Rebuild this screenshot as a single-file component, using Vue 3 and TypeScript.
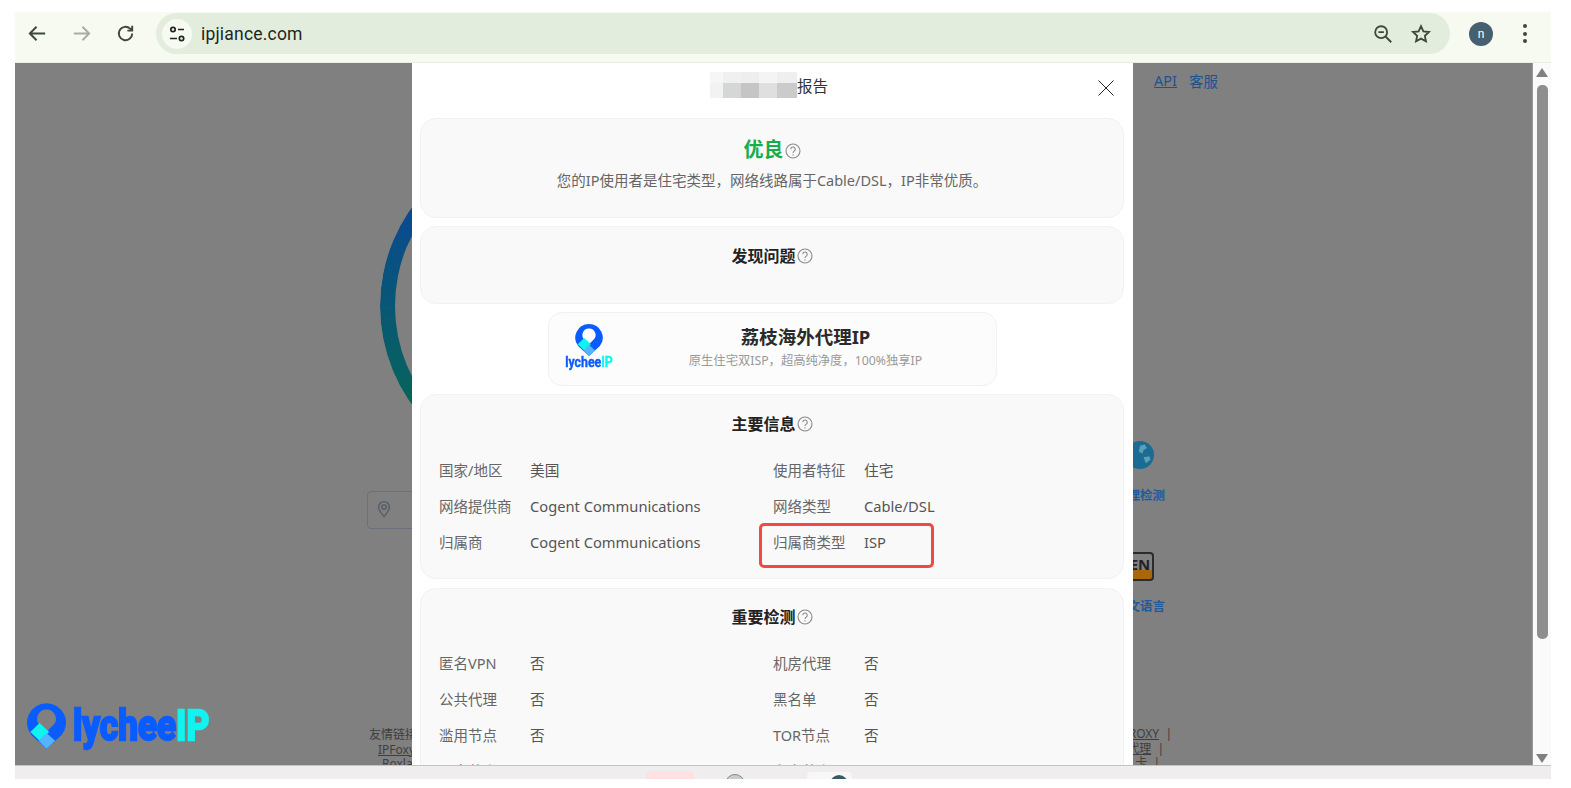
<template>
  <div class="frame">
    <svg class="defs" aria-hidden="true">
      <symbol id="help" viewBox="0 0 16 16">
        <circle cx="8" cy="8" r="7" />
        <path d="M5.8 6.2a2.2 2.2 0 1 1 3.4 1.9c-.8.5-1.2 1-1.2 2" />
        <path d="M8 11.3v1.2" />
      </symbol>
    </svg>

    <!-- browser toolbar -->
    <header class="toolbar">
      <div class="nav-btns">
        <svg class="nav-icon" viewBox="0 0 24 24"><path d="M20 12H5M11 5l-7 7 7 7" /></svg>
        <svg class="nav-icon dim" viewBox="0 0 24 24"><path d="M4 12h15M13 5l7 7-7 7" /></svg>
        <svg class="nav-icon" viewBox="0 0 24 24"><path d="M19 12a7 7 0 1 1-2.2-5.1L19 9M19 4v5h-5" /></svg>
      </div>
      <div class="omnibox">
        <span class="site-chip">
          <svg viewBox="0 0 20 20" class="tune"><circle cx="6" cy="5.5" r="2.2" /><path d="M11 5.5h6M3 14.5h7" /><circle cx="14.5" cy="14.5" r="2.2" /></svg>
        </span>
        <span class="url">ipjiance.com</span>
        <span class="spacer"></span>
        <svg class="omni-icon" viewBox="0 0 24 24"><circle cx="10" cy="10" r="6.5" /><path d="M7 10h6M15 15l6 6" /></svg>
        <svg class="omni-icon" viewBox="0 0 24 24"><path d="M12 3.5l2.6 5.6 6.1.7-4.5 4.2 1.2 6-5.4-3-5.4 3 1.2-6-4.5-4.2 6.1-.7z" /></svg>
      </div>
      <span class="avatar">n</span>
      <span class="kebab"><i></i><i></i><i></i></span>
    </header>

    <div class="viewport">
      <!-- page behind the dialog -->
      <main class="page">
        <div class="ring"></div>
        <div class="locate">
          <svg viewBox="0 0 16 20"><path d="M8 18.5C4 14 1.8 11 1.8 7.8a6.2 6.2 0 0 1 12.4 0C14.2 11 12 14 8 18.5z" /><circle cx="8" cy="7.8" r="2.5" /></svg>
        </div>
        <div class="top-links"><a class="underline">API</a><a>客服</a></div>
        <div class="tool tool-globe">
          <svg viewBox="0 0 24 24"><circle cx="12" cy="12" r="12" fill="#1a6c93" /><path d="M12 4l4-1 2 3-3 2-1 3-3-2zM15 14l5-1 1 3-4 3z" fill="#5f9db3" /></svg>
          <b>代理检测</b>
        </div>
        <div class="tool tool-lang">
          <span class="en-badge"><em>EN</em></span>
          <b>中文语言</b>
        </div>
        <div class="friend-left">
          <p>友情链接</p>
          <p class="l2"><u>IPFoxy</u></p>
          <p class="l3">Roxlabs</p>
        </div>
        <div class="friend-right">
          <p><u>ROXY</u> &nbsp;|</p>
          <p class="r2"><u>代理</u> &nbsp;|</p>
          <p class="r3">卡 &nbsp;|</p>
        </div>
      </main>

      <!-- report dialog -->
      <section class="dialog">
        <div class="dialog-head">
          <span class="masked">
            <i v-for="(c, i) in mosaic" :key="i" :style="{ background: c }"></i>
          </span>
          <span class="head-title">报告</span>
          <svg class="close" viewBox="0 0 16 16"><path d="M.5.5l15 15M15.5.5l-15 15" /></svg>
        </div>

        <div class="card verdict">
          <h3 class="good">优良<svg class="help"><use href="#help" /></svg></h3>
          <p>您的IP使用者是住宅类型，网络线路属于Cable/DSL，IP非常优质。</p>
        </div>

        <div class="card issues">
          <h3>发现问题<svg class="help"><use href="#help" /></svg></h3>
        </div>

        <div class="promo">
          <div class="promo-logo">
            <svg viewBox="0 0 118 138" class="pin">
              <path d="M59 0A59 59 0 0 1 105 96L59 138 13 96A59 59 0 0 1 59 0z" fill="#0a5cff" />
              <path d="M59 19a28 28 0 0 1 20 48L59 87 39 67A28 28 0 0 1 59 19z" fill="#fff" />
              <path d="M10 87l28-27 29 27-29 27z" fill="#11f3f0" />
              <path d="M59 138l-24-24 24-24 26 24z" fill="#55b4ff" />
            </svg>
            <span class="promo-word">lychee<span>IP</span></span>
          </div>
          <div class="promo-text">
            <strong>荔枝海外代理IP</strong>
            <span>原生住宅双ISP，超高纯净度，100%独享IP</span>
          </div>
        </div>

        <div class="card info">
          <h3>主要信息<svg class="help"><use href="#help" /></svg></h3>
          <div class="rows">
            <div v-for="row in mainInfo" :key="row.k" class="row">
              <span class="k">{{ row.k }}</span><span class="v">{{ row.v }}</span>
            </div>
          </div>
          <div class="mark"></div>
        </div>

        <div class="card info checks">
          <h3>重要检测<svg class="help"><use href="#help" /></svg></h3>
          <div class="rows">
            <div v-for="row in checks" :key="row.k" class="row">
              <span class="k">{{ row.k }}</span><span class="v">{{ row.v }}</span>
            </div>
          </div>
        </div>
      </section>

      <div class="watermark">
        <svg viewBox="0 0 118 138" class="wm-pin">
          <path d="M59 0A59 59 0 0 1 105 96L59 138 13 96A59 59 0 0 1 59 0z" fill="#0a5cff" />
          <path d="M59 19a28 28 0 0 1 20 48L59 87 39 67A28 28 0 0 1 59 19z" fill="#808080" />
          <path d="M10 87l28-27 29 27-29 27z" fill="#11f3f0" />
          <path d="M59 138l-24-24 24-24 26 24z" fill="#55b4ff" />
        </svg>
        <span class="wm-word">lychee<span>IP</span></span>
      </div>

      <!-- page scrollbar -->
      <aside class="scrollbar">
        <span class="arrow up"></span>
        <span class="thumb"></span>
        <span class="arrow down"></span>
      </aside>
    </div>

    <footer class="taskbar">
      <span class="task-red"></span>
      <span class="task-round"></span>
      <span class="task-active"><i></i></span>
    </footer>
  </div>
</template>

<script setup lang="ts">
// blurred part of the title, two rows of five blocks
const mosaic = [
  '#f6f6f6', '#eff0f0', '#eeeeee', '#f4f4f4', '#efefef',
  '#f3f2f2', '#d5d6d6', '#c5c5c5', '#dfdfdf', '#cbcbcb'
]

const mainInfo = [
  { k: '国家/地区', v: '美国' },
  { k: '使用者特征', v: '住宅' },
  { k: '网络提供商', v: 'Cogent Communications' },
  { k: '网络类型', v: 'Cable/DSL' },
  { k: '归属商', v: 'Cogent Communications' },
  { k: '归属商类型', v: 'ISP' }
]

const checks = [
  { k: '匿名VPN', v: '否' },
  { k: '机房代理', v: '否' },
  { k: '公共代理', v: '否' },
  { k: '黑名单', v: '否' },
  { k: '滥用节点', v: '否' },
  { k: 'TOR节点', v: '否' },
  { k: '恶意节点', v: '否' },
  { k: '爬虫节点', v: '否' }
]
</script>

<style>
html, body {
  margin: 0;
  background: #fff;
  overflow: hidden;
}
</style>

<style scoped>
.frame {
  width: 1536px;
  height: 767px;
  margin: 12px 0 0 15px;
  display: flex;
  flex-direction: column;
  font-family: "Noto Sans", "Noto Sans CJK SC", sans-serif;
  overflow: hidden;
}
.defs {
  position: absolute;
  width: 0;
  height: 0;
}

.toolbar {
  height: 51px;
  flex: none;
  box-sizing: border-box;
  padding: 1px 0 8px 11px;
  display: flex;
  align-items: center;
  background: #f6faf1;
  border-bottom: 1px solid #e9ede4;
}
.nav-btns {
  display: flex;
  gap: 21px;
  width: 130px;
}
.nav-icon {
  width: 23px;
  height: 23px;
  fill: none;
  stroke: #3d473c;
  stroke-width: 2;
}
.nav-icon.dim {
  stroke: #a9ada6;
}
.omnibox {
  flex: none;
  width: 1294px;
  height: 41px;
  box-sizing: border-box;
  border-radius: 21px;
  background: #e3edde;
  display: flex;
  align-items: center;
  padding: 0 18px 0 6px;
}
.site-chip {
  width: 30px;
  height: 30px;
  border-radius: 50%;
  background: #f6faf1;
  display: flex;
  align-items: center;
  justify-content: center;
}
.tune {
  width: 20px;
  height: 20px;
  fill: none;
  stroke: #20261f;
  stroke-width: 1.7;
}
.url {
  margin-left: 9px;
  font-family: "Roboto", sans-serif;
  font-size: 17.5px;
  letter-spacing: 0.2px;
  color: #20261f;
}
.spacer {
  flex: 1;
}
.omni-icon {
  width: 22px;
  height: 22px;
  margin-left: 16px;
  fill: none;
  stroke: #3d473c;
  stroke-width: 2;
}
.avatar {
  margin-left: 19px;
  width: 24px;
  height: 24px;
  border-radius: 50%;
  background: #46606f;
  color: #fff;
  font: 12px "Roboto", sans-serif;
  display: flex;
  align-items: center;
  justify-content: center;
}
.kebab {
  margin-left: 30px;
  display: flex;
  flex-direction: column;
  gap: 3.5px;
}
.kebab i {
  width: 4px;
  height: 4px;
  border-radius: 50%;
  background: #3d473c;
}

.viewport {
  position: relative;
  flex: none;
  height: 703px;
  overflow: hidden;
  border-bottom: 1px solid #c4c4c4;
  box-sizing: border-box;
}
.page {
  position: absolute;
  inset: 0 19px 0 0;
  background: #808080;
  overflow: hidden;
}
.ring {
  position: absolute;
  left: 365px;
  top: 74px;
  width: 338px;
  height: 338px;
  box-sizing: border-box;
  border-radius: 50%;
  padding: 15px;
  background: linear-gradient(#0a4a90 22%, #07645a 78%);
  -webkit-mask: linear-gradient(#000 0 0) content-box exclude, linear-gradient(#000 0 0);
  mask: linear-gradient(#000 0 0) content-box exclude, linear-gradient(#000 0 0);
}
.locate {
  position: absolute;
  left: 352px;
  top: 428px;
  width: 120px;
  height: 38px;
  box-sizing: border-box;
  border: 1px solid #6a7080;
  border-radius: 4px;
  padding: 8px 0 0 9px;
}
.locate svg {
  width: 14px;
  height: 18px;
  display: block;
  fill: none;
  stroke: #535a68;
  stroke-width: 1.5;
}
.top-links {
  position: absolute;
  left: 1139px;
  top: 7px;
  display: flex;
  gap: 12px;
  font-size: 14.5px;
  color: #1d5290;
}
.underline {
  text-decoration: underline;
}
.tool {
  position: absolute;
  width: 50px;
  display: flex;
  flex-direction: column;
  align-items: center;
  font-size: 12.5px;
  color: #1e5a9e;
}
.tool svg {
  width: 28px;
  height: 28px;
}
.tool b {
  line-height: 16px;
  white-space: nowrap;
}
.tool-globe {
  left: 1100px;
  top: 378px;
}
.tool-globe b {
  margin-top: 19px;
}
.tool-lang {
  left: 1100px;
  top: 489px;
}
.tool-lang b {
  margin-top: 18px;
}
.en-badge {
  width: 28px;
  height: 29px;
  box-sizing: border-box;
  border: 2px solid #2b2b2b;
  border-radius: 4px;
  background: linear-gradient(#808080 66%, #a86708 66%);
  display: flex;
  justify-content: center;
  overflow: hidden;
}
.en-badge em {
  font: 700 15px/20px "Open Sans", sans-serif;
  color: #222;
}
.friend-left,
.friend-right {
  position: absolute;
  font-size: 12px;
  line-height: 14.5px;
  color: #3e3e3e;
  white-space: nowrap;
}
.friend-left {
  left: 354px;
  top: 665px;
}
.friend-right {
  left: 1100px;
  top: 664px;
  width: 57px;
  text-align: right;
}
.friend-left p,
.friend-right p {
  margin: 0;
}
.l2 {
  padding-left: 9px;
}
.l3 {
  padding-left: 13px;
}
.r2 {
  padding-right: 8px;
}
.r3 {
  padding-right: 12px;
}

.dialog {
  position: absolute;
  left: 397px;
  top: 0;
  width: 721px;
  height: 702px;
  box-sizing: border-box;
  background: #fff;
  padding: 0 9px 0 8px;
  overflow: hidden;
}
.dialog-head {
  position: relative;
  height: 55px;
  display: flex;
  padding: 12px 0 0 377px;
  box-sizing: border-box;
  font-size: 15.5px;
  color: #333;
}
.masked {
  position: absolute;
  left: 290px;
  top: 9px;
  width: 87px;
  height: 26px;
  display: grid;
  grid-template-columns: 13px 18px 18px 18px 20px;
  grid-template-rows: 11px 15px;
}
.head-title {
  line-height: 22px;
}
.close {
  position: absolute;
  right: 10px;
  top: 17px;
  width: 16px;
  height: 16px;
  fill: none;
  stroke: #222;
  stroke-width: 1;
}

.card {
  background: #f9f9f9;
  border: 1px solid #f1f1f1;
  border-radius: 16px;
  box-sizing: border-box;
  margin-bottom: 8px;
  text-align: center;
}
.card h3 {
  margin: 0;
  font-size: 16px;
  line-height: 22px;
  font-weight: 700;
  color: #222;
}
.help {
  width: 16px;
  height: 16px;
  margin-left: 1px;
  vertical-align: -2px;
  fill: none;
  stroke: #8a8a8a;
  stroke-width: 1.1;
}
.verdict {
  height: 100px;
  padding-top: 18px;
}
.verdict h3.good {
  font-size: 20px;
  line-height: 26px;
  color: #17ad4a;
}
.verdict p {
  margin: 6px 0 0;
  font-size: 14.5px;
  line-height: 22px;
  color: #666;
}
.issues {
  height: 78px;
  padding-top: 18px;
}
.promo {
  width: 449px;
  height: 74px;
  margin: 0 auto 8px;
  box-sizing: border-box;
  border: 1px solid #f1f1f1;
  border-radius: 14px;
  background: #fcfcfc;
  display: flex;
  align-items: center;
}
.promo-logo {
  width: 80px;
  padding-bottom: 5px;
  display: flex;
  flex-direction: column;
  align-items: center;
}
.pin {
  width: 28px;
  height: 32px;
}
.promo-word {
  font: 700 15px/13px "Roboto", sans-serif;
  transform: scaleX(0.82);
  -webkit-text-stroke: 0.4px currentColor;
  color: #0a5cff;
}
.promo-word span {
  color: #11f3f0;
}
.promo-text {
  flex: 1;
  display: flex;
  flex-direction: column;
  align-items: center;
  padding: 0 13px 5px 0;
}
.promo-text strong {
  font-size: 18.5px;
  line-height: 26px;
  color: #2b2b2b;
}
.promo-text span {
  margin-top: 2px;
  font-size: 12.3px;
  line-height: 18px;
  color: #999;
}
.info {
  position: relative;
  height: 185px;
  margin-bottom: 9px;
  padding-top: 18px;
}
.rows {
  display: grid;
  grid-template-columns: 334px 1fr;
  margin-top: 24px;
  padding-left: 18px;
  text-align: left;
  font-size: 14.5px;
}
.row {
  display: flex;
  height: 36px;
  line-height: 22px;
}
.k {
  width: 91px;
  flex: none;
  color: #666;
}
.v {
  font-size: 14.7px;
  color: #555;
}
.mark {
  position: absolute;
  left: 338px;
  top: 128px;
  width: 175px;
  height: 45px;
  box-sizing: border-box;
  border: 3px solid #ef4a43;
  border-radius: 5px;
}
.checks {
  height: 300px;
  margin-bottom: 0;
  padding-top: 17px;
}

.watermark {
  position: absolute;
  left: 12px;
  top: 640px;
  display: flex;
  align-items: center;
  gap: 7px;
}
.wm-pin {
  width: 39px;
  height: 46px;
}
.wm-word {
  font: 700 42px/42px "Roboto", sans-serif;
  color: #0a5cff;
  transform: scaleX(0.84);
  transform-origin: left center;
  -webkit-text-stroke: 2.5px currentColor;
}
.wm-word span {
  color: #11f3f0;
}

.scrollbar {
  position: absolute;
  right: 0;
  top: 0;
  bottom: 0;
  width: 19px;
  background: #fafafa;
  border-left: 1px solid #9a9a9a;
  box-sizing: border-box;
  display: flex;
  flex-direction: column;
  align-items: center;
}
.arrow {
  width: 0;
  height: 0;
  border-left: 6px solid transparent;
  border-right: 6px solid transparent;
  flex: none;
}
.arrow.up {
  margin-top: 5px;
  border-bottom: 9px solid #808080;
}
.arrow.down {
  margin-top: auto;
  margin-bottom: 2px;
  border-top: 9px solid #808080;
}
.thumb {
  width: 11px;
  height: 554px;
  margin-top: 8px;
  border-radius: 5px;
  background: #8e8e8e;
}

.taskbar {
  position: relative;
  flex: none;
  height: 13px;
  background: #efedee;
  overflow: hidden;
}
.task-red {
  position: absolute;
  left: 631px;
  top: 5px;
  width: 48px;
  height: 12px;
  border-radius: 4px 4px 0 0;
  background: #fde1e3;
}
.task-round {
  position: absolute;
  left: 710px;
  top: 8px;
  width: 18px;
  height: 18px;
  border-radius: 50%;
  background: #c9ccd2;
  border: 1px solid #888;
}
.task-active {
  position: absolute;
  left: 792px;
  top: 6px;
  width: 45px;
  height: 12px;
  border-radius: 4px 4px 0 0;
  background: #f7f7f7;
}
.task-active i {
  position: absolute;
  left: 23px;
  top: 3px;
  width: 18px;
  height: 18px;
  border-radius: 50%;
  background: #3a5a68;
}
</style>
